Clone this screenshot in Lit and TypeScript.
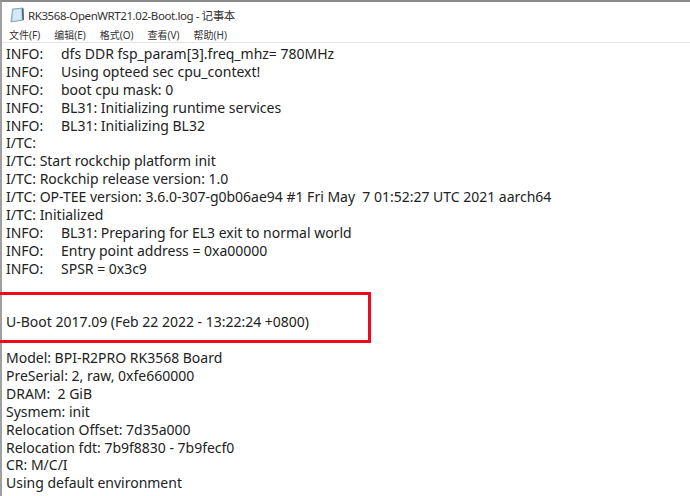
import { LitElement, html, css } from "lit";
import { customElement } from "lit/decorators.js";

const LINES = [
  "INFO:\tdfs DDR fsp_param[3].freq_mhz= 780MHz",
  "INFO:\tUsing opteed sec cpu_context!",
  "INFO:\tboot cpu mask: 0",
  "INFO:\tBL31: Initializing runtime services",
  "INFO:\tBL31: Initializing BL32",
  "I/TC:",
  "I/TC: Start rockchip platform init",
  "I/TC: Rockchip release version: 1.0",
  "I/TC: OP-TEE version: 3.6.0-307-g0b06ae94 #1 Fri May  7 01:52:27 UTC 2021 aarch64",
  "I/TC: Initialized",
  "INFO:\tBL31: Preparing for EL3 exit to normal world",
  "INFO:\tEntry point address = 0xa00000",
  "INFO:\tSPSR = 0x3c9",
  "",
  "",
  "U-Boot 2017.09 (Feb 22 2022 - 13:22:24 +0800)",
  "",
  "Model: BPI-R2PRO RK3568 Board",
  "PreSerial: 2, raw, 0xfe660000",
  "DRAM:  2 GiB",
  "Sysmem: init",
  "Relocation Offset: 7d35a000",
  "Relocation fdt: 7b9f8830 - 7b9fecf0",
  "CR: M/C/I",
  "Using default environment",
];
const MENU = ["文件(F)", "编辑(E)", "格式(O)", "查看(V)", "帮助(H)"];

@customElement("app-root")
export class AppRoot extends LitElement {
  static styles = css`
    :host {
      display: block;
      width: 690px;
      height: 496px;
      overflow: hidden;
      position: relative;
      background: #fff;
      font-family: "Noto Sans", "Noto Sans CJK SC", sans-serif;
      color: #222;
    }
    .window {
      height: 100%;
      box-sizing: border-box;
      border-top: 2px solid #8a8a8a;
      border-left: 2px solid #a0a0a0;
      display: flex;
      flex-direction: column;
    }
    .title {
      height: 26px;
      display: flex;
      align-items: center;
      gap: 3px;
      padding-left: 8px;
      font-size: 11.5px;
      letter-spacing: -0.42px;
      color: #333;
    }
    .icon { width: 15px; height: 16px; flex: none; }
    .menu {
      height: 15px;
      padding: 0 0 2px 7px;
      box-sizing: border-box;
      display: flex;
      gap: 14px;
      align-items: center;
      font-size: 10px;
      color: #333;
      border-bottom: 1px solid #e6e6e6;
    }
    .log {
      margin: 0;
      padding: 2px 0 0 4px;
      font: inherit;
      font-size: 14px;
      line-height: 17.89px;
      letter-spacing: -0.01px;
      white-space: pre;
      tab-size: 55px;
    }
    .box {
      position: absolute;
      left: -4px;
      top: 292px;
      width: 375px;
      height: 51px;
      box-sizing: border-box;
      border: 3px solid #ee0a1e;
    }
  `;

  render() {
    return html`
      <div class="window">
        <div class="title">
          <svg class="icon" viewBox="0 0 15 16">
            <path d="M2.5 2 L13 1 L13.5 13 L1 15 Z" fill="#a7d3ec" stroke="#7b96a8" stroke-width="0.8" />
            <path d="M3.5 3 L11 2.2 L11.5 12.5 L2.8 13.8 Z" fill="#d5e8f3" />
            <path d="M12.6 1.5 L13.2 13" stroke="#4f6272" stroke-width="1.6" />
          </svg>
          <span>RK3568-OpenWRT21.02-Boot.log - 记事本</span>
        </div>
        <div class="menu">${MENU.map((m) => html`<span>${m}</span>`)}</div>
        <pre class="log">${LINES.join("\n")}</pre>
      </div>
      <div class="box"></div>
    `;
  }
}
